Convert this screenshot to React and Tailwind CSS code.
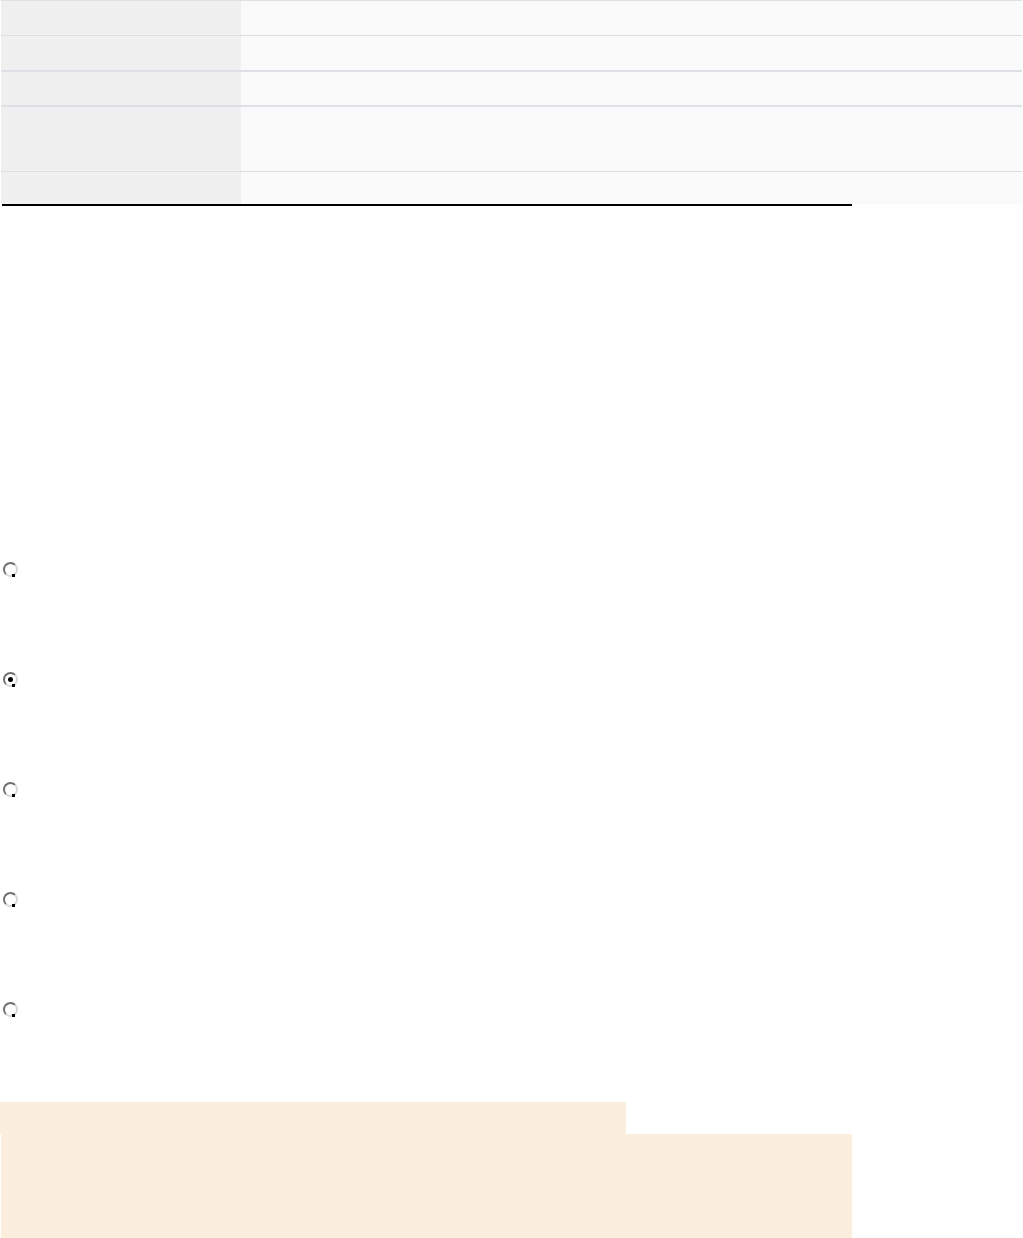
import React from "react";

const rows = [
  { h: "h-[35px]", border: "border-b border-[#dedede]" },
  { h: "h-[36px]", border: "border-b-2 border-[#dde1e6]" },
  { h: "h-[35px]", border: "border-b-2 border-[#dde1e6]" },
  { h: "h-[65px]", border: "border-b border-[#dedede]" },
  { h: "h-[32px]", border: "" },
];

function Radio({ checked }) {
  return (
    <span className="relative flex h-[15px] w-[15px] items-center justify-center rounded-full border-2 border-t-[#707070] border-l-[#707070] border-b-[#d8d8d8] border-r-[#d8d8d8] bg-white">
      {checked ? <span className="h-[5px] w-[5px] rounded-full bg-black" /> : null}
      <span className="absolute -bottom-[2px] right-[1px] h-[3px] w-[3px] bg-black" />
    </span>
  );
}

export default function App() {
  const radios = [false, true, false, false, false];
  return (
    <div className="w-[1023px] h-[1238px] overflow-hidden bg-white font-['Liberation_Sans',sans-serif] text-sm">
      <div className="ml-px w-[1021px] border-t border-[#dde1e6]">
        {rows.map((r, i) => (
          <div key={i} className={`grid grid-cols-[240px_1fr] ${r.h} ${r.border}`}>
            <div className="bg-[#f0f0f0]" />
            <div className="bg-[#fafafa]" />
          </div>
        ))}
      </div>
      <div className="ml-[2px] h-[2px] w-[850px] bg-black" />
      <div className="pt-[356px] pl-[3px] flex flex-col">
        {radios.map((c, i) => (
          <div key={i} className="h-[110px]">
            <Radio checked={c} />
          </div>
        ))}
      </div>
      <div className="-mt-[10px]">
        <div className="h-[32px] w-[626px] bg-[#fbeedc]" />
        <div className="ml-px h-[104px] w-[851px] bg-[#fbeedc]" />
      </div>
    </div>
  );
}
